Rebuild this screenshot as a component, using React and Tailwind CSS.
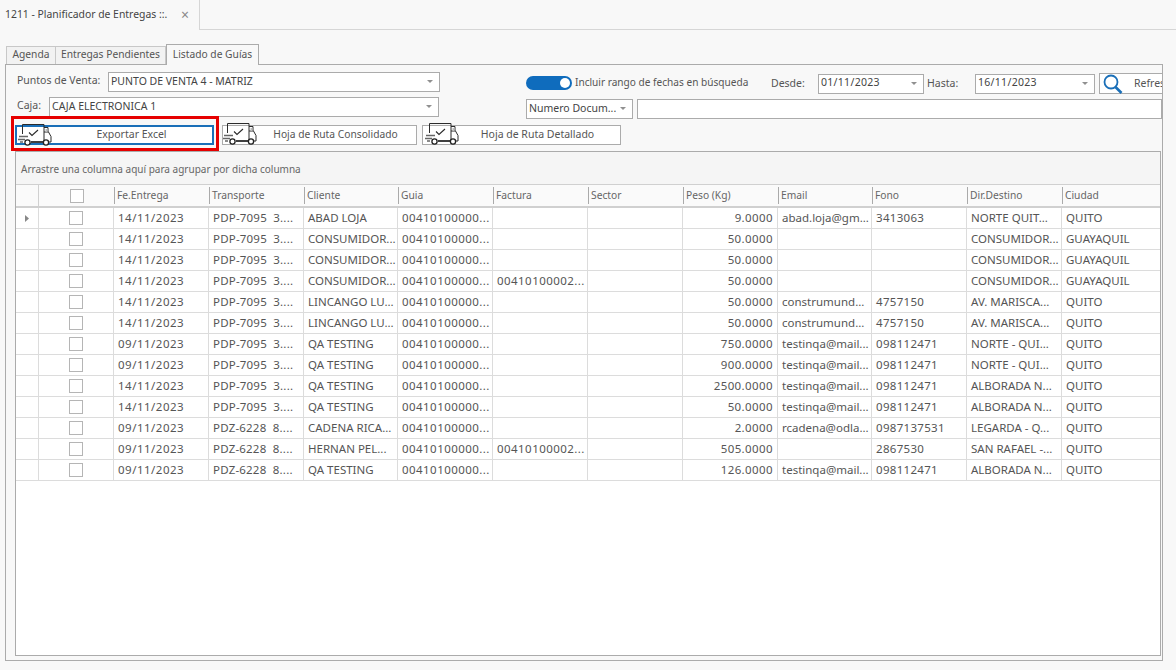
const colWidths = "grid-cols-[23px_75px_95px_95px_94px_95px_95px_95px_95px_94px_95px_95px_99px]";

const headers = ["Fe.Entrega", "Transporte", "Cliente", "Guia", "Factura", "Sector", "Peso (Kg)", "Email", "Fono", "Dir.Destino", "Ciudad"];

// numeric columns read wider than the rest in the original grid
const spaced = { 0: "tracking-[0.5px]", 1: "tracking-[0.2px]", 3: "tracking-[0.45px]", 4: "tracking-[0.45px]", 6: "tracking-[0.4px]", 8: "tracking-[0.3px]" };

const rows = [
  ["14/11/2023", "PDP-7095  3....", "ABAD LOJA", "00410100000...", "", "", "9.0000", "abad.loja@gm...", "3413063", "NORTE QUIT...", "QUITO"],
  ["14/11/2023", "PDP-7095  3....", "CONSUMIDOR...", "00410100000...", "", "", "50.0000", "", "", "CONSUMIDOR...", "GUAYAQUIL"],
  ["14/11/2023", "PDP-7095  3....", "CONSUMIDOR...", "00410100000...", "", "", "50.0000", "", "", "CONSUMIDOR...", "GUAYAQUIL"],
  ["14/11/2023", "PDP-7095  3....", "CONSUMIDOR...", "00410100000...", "00410100002...", "", "50.0000", "", "", "CONSUMIDOR...", "GUAYAQUIL"],
  ["14/11/2023", "PDP-7095  3....", "LINCANGO LU...", "00410100000...", "", "", "50.0000", "construmund...", "4757150", "AV. MARISCA...", "QUITO"],
  ["14/11/2023", "PDP-7095  3....", "LINCANGO LU...", "00410100000...", "", "", "50.0000", "construmund...", "4757150", "AV. MARISCA...", "QUITO"],
  ["09/11/2023", "PDP-7095  3....", "QA TESTING", "00410100000...", "", "", "750.0000", "testinqa@mail...", "098112471", "NORTE - QUI...", "QUITO"],
  ["09/11/2023", "PDP-7095  3....", "QA TESTING", "00410100000...", "", "", "900.0000", "testinqa@mail...", "098112471", "NORTE - QUI...", "QUITO"],
  ["14/11/2023", "PDP-7095  3....", "QA TESTING", "00410100000...", "", "", "2500.0000", "testinqa@mail...", "098112471", "ALBORADA N...", "QUITO"],
  ["14/11/2023", "PDP-7095  3....", "QA TESTING", "00410100000...", "", "", "50.0000", "testinqa@mail...", "098112471", "ALBORADA N...", "QUITO"],
  ["09/11/2023", "PDZ-6228  8....", "CADENA RICA...", "00410100000...", "", "", "2.0000", "rcadena@odla...", "0987137531", "LEGARDA - Q...", "QUITO"],
  ["09/11/2023", "PDZ-6228  8....", "HERNAN PEL...", "00410100000...", "00410100002...", "", "505.0000", "", "2867530", "SAN RAFAEL -...", "QUITO"],
  ["09/11/2023", "PDZ-6228  8....", "QA TESTING", "00410100000...", "", "", "126.0000", "testinqa@mail...", "098112471", "ALBORADA N...", "QUITO"],
];

function Truck() {
  return (
    <svg width="34" height="22" viewBox="0 0 34 22" fill="none" className="shrink-0">
      <path d="M4.5 10V.5h21.5v17.5H13" stroke="#2b2b2b" strokeWidth="1" />
      <path d="M11 8.5l3 3 6-5.5" stroke="#2b2b2b" strokeWidth="1.1" />
      <path d="M26 3.5h4V8M26 8h4.5l2.5 4.5V18h-2" stroke="#2b2b2b" strokeWidth="1" />
      <path d="M27.5 5h2v3h-2z" fill="#bbb" />
      <path d="M1 12.5h9M0 15.5h7M2 18h3" stroke="#666" strokeWidth="1.4" />
      <path d="M13 18h13" stroke="#2b2b2b" strokeWidth="1.6" />
      <circle cx="9.5" cy="18.5" r="2.6" fill="#fff" stroke="#222" strokeWidth="1.3" />
      <circle cx="28" cy="18.5" r="2.6" fill="#fff" stroke="#222" strokeWidth="1.3" />
    </svg>
  );
}

function Arrow() {
  return (
    <svg width="6" height="3" viewBox="0 0 6 3" className="shrink-0">
      <path d="M0 0h6L3 3z" fill="#909090" />
    </svg>
  );
}

function Combo({ value, className }) {
  return (
    <div className={`flex items-center bg-white border border-[#ababab] pl-[2px] pr-[6px] pb-[1px] justify-between shrink-0 text-[#444] ${className}`}>
      <span className="whitespace-nowrap overflow-hidden">{value}</span>
      <Arrow />
    </div>
  );
}

function Check() {
  return <div className="w-[14px] h-[14px] bg-white border border-[#b5b5b5]" />;
}

export default function App() {
  return (
    <div className="w-[1176px] h-[670px] overflow-hidden bg-[#f8f8f8] flex flex-col text-[#555] [font-family:'DejaVu_Sans',sans-serif] text-[10.5px]">
      {/* document tab */}
      <div className="h-[30px] flex shrink-0">
        <div className="w-[200px] bg-[#f8f8f8] border-r border-[#d6d6d6] flex items-center justify-between pl-[5px] pr-[10px] pb-[1px] text-[#444] whitespace-nowrap">
          <span className="text-[10.4px]">1211 - Planificador de Entregas ::.</span>
          <span className="text-[14px] leading-none text-[#888]">×</span>
        </div>
        <div className="flex-1 border-b border-[#d6d6d6]" />
      </div>

      {/* inner tabs */}
      <div className="flex items-end h-[34px] pl-[6px] shrink-0 whitespace-nowrap text-[10.25px]">
        <div className="w-[50px] h-[18px] flex items-center justify-center pb-[1px] bg-[#f2f2f2] border border-b-0 border-[#c8c8c8]">Agenda</div>
        <div className="w-[110px] h-[18px] flex items-center justify-center pb-[1px] bg-[#f2f2f2] border border-l-0 border-b-0 border-[#c8c8c8]">Entregas Pendientes</div>
        <div className="w-[93px] h-[21px] flex items-center justify-center pb-[1px] bg-[#f8f8f8] border border-b-0 border-[#ababab] mb-[-1px] relative z-10">Listado de Guías</div>
      </div>

      {/* panel */}
      <div className="w-[1158px] ml-[5px] h-[597px] border border-[#ababab] overflow-hidden flex flex-col shrink-0">
        <div className="flex h-[54px] shrink-0 whitespace-nowrap">
          <div className="w-[435px] ml-[11px] mt-[7px] flex flex-col gap-[5px] shrink-0">
            <div className="flex items-center h-[20px]">
              <span className="w-[91px] shrink-0 pb-[2px]">Puntos de Venta:</span>
              <Combo value="PUNTO DE VENTA 4 - MATRIZ" className="w-[332px] h-[20px]" />
            </div>
            <div className="flex items-center h-[20px]">
              <span className="w-[32px] shrink-0 pb-[2px]">Caja:</span>
              <Combo value="CAJA ELECTRONICA 1" className="w-[390px] h-[20px]" />
            </div>
          </div>
          <div className="flex-1 ml-[74px] mt-[8px] flex flex-col gap-[5px] min-w-0">
            <div className="flex items-center h-[21px]">
              <div className="w-[46px] h-[14px] rounded-full bg-[#0f6cbd] flex items-center justify-end pr-[2px] shrink-0 mb-[1px]">
                <div className="w-[10px] h-[10px] rounded-full bg-white" />
              </div>
              <span className="ml-[3px] w-[196px] shrink-0 text-[10.1px] pb-[2px]">Incluir rango de fechas en búsqueda</span>
              <span className="w-[47px] shrink-0">Desde:</span>
              <Combo value="01/11/2023" className="w-[106px] h-[20px] tracking-[0.3px]" />
              <span className="ml-[3px] w-[48px] shrink-0">Hasta:</span>
              <Combo value="16/11/2023" className="w-[120px] h-[20px] tracking-[0.3px]" />
              <div className="ml-[4px] w-[80px] h-[21px] bg-white border border-[#ababab] flex items-center pl-[2px] shrink-0">
                <svg width="22" height="20" viewBox="0 0 22 20" fill="none" className="shrink-0">
                  <circle cx="9" cy="8" r="6.5" stroke="#1a6fb8" strokeWidth="1.8" />
                  <path d="M13.5 13l6 6" stroke="#1a6fb8" strokeWidth="2.6" />
                </svg>
                <span className="ml-[10px]">Refresh</span>
              </div>
            </div>
            <div className="flex items-center h-[20px]">
              <Combo value="Numero Docum..." className="w-[107px] h-[20px]" />
              <div className="ml-[4px] flex-1 h-[20px] bg-white border border-[#ababab]" />
            </div>
          </div>
        </div>

        {/* action buttons */}
        <div className="flex h-[20px] mt-[6px] ml-[9px] shrink-0 whitespace-nowrap">
          <div className="relative w-[199px] h-[20px] bg-white border-2 border-[#1a6fb8] flex items-center justify-center pl-[34px] pb-[1px]">
            <div className="absolute left-[1px] top-[-3px]"><Truck /></div>
            Exportar Excel
            <div className="absolute left-[-6px] right-[-7px] top-[-11px] bottom-[-8px] border-[3px] border-[#e60000] pointer-events-none" />
          </div>
          <div className="relative ml-[8px] w-[195px] h-[20px] bg-white border border-[#ababab] flex items-center justify-center pl-[32px] pb-[1px] text-[10.25px]">
            <div className="absolute left-0 top-[-3px]"><Truck /></div>
            Hoja de Ruta Consolidado
          </div>
          <div className="relative ml-[5px] w-[199px] h-[20px] bg-white border border-[#ababab] flex items-center justify-center pl-[32px] pb-[1px]">
            <div className="absolute left-[2px] top-[-3px]"><Truck /></div>
            Hoja de Ruta Detallado
          </div>
        </div>

        {/* grid */}
        <div className="ml-[9px] mt-[6px] w-[1146px] h-[505px] bg-white border border-[#ababab] flex flex-col shrink-0">
          <div className="h-[33px] bg-[#f5f5f5] border-b border-[#d0d0d0] flex items-center pl-[5px] pt-[2px] text-[10px] text-[#666] shrink-0">
            Arrastre una columna aquí para agrupar por dicha columna
          </div>
          <div className={`grid ${colWidths} h-[23px] bg-[#fafafa] border-b-2 border-[#d0d0d0] text-[10.25px] text-[#666] shrink-0`}>
            <div className="border-r border-[#d0d0d0]" />
            <div className="flex items-center justify-center"><Check /></div>
            {headers.map((h) => (
              <div key={h} className="flex items-center pl-[2px] my-[2px] border-l border-[#aaa]">{h}</div>
            ))}
          </div>
          {rows.map((row, i) => (
            <div key={i} className={`grid ${colWidths} h-[21px] border-b border-[#dcdcdc] text-[11.5px] text-[#555] shrink-0`}>
              <div className="flex items-center justify-center border-r border-[#dcdcdc]">
                {i === 0 && (
                  <svg width="4" height="7" viewBox="0 0 4 7"><path d="M0 0l4 3.5L0 7z" fill="#888" /></svg>
                )}
              </div>
              <div className="flex items-center justify-center border-r border-[#dcdcdc]"><Check /></div>
              {row.map((cell, j) => (
                <div
                  key={j}
                  className={`flex items-center whitespace-pre overflow-hidden px-[4px] ${spaced[j] || ""} ${j === 10 ? "" : "border-r border-[#dcdcdc]"} ${j === 6 ? "justify-end" : ""}`}
                >
                  {cell}
                </div>
              ))}
            </div>
          ))}
        </div>
      </div>
    </div>
  );
}
